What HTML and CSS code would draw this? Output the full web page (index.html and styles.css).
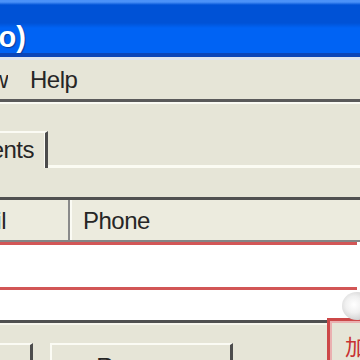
FILE: index.html
```html
<!DOCTYPE html>
<html>
<head>
    <meta charset="utf-8">
    <title>Client Manager (Demo)</title>
    <link rel="stylesheet" href="styles.css">
</head>
<body>
    <div class="window">
        <div class="titlebar">
            <span class="clip title-clip"><span>Client Manager (Demo)</span></span>
        </div>

        <div class="menubar">
            <span class="clip menu-clip"><span>File Edit View</span></span>
            <span class="menu-item">Help</span>
        </div>

        <div class="tabstrip">
            <div class="tab">
                <span class="clip tab-clip"><span>Clients</span></span>
            </div>
        </div>

        <div class="panel">
            <div class="listview">
                <div class="lv-header">
                    <div class="col col-email"><span class="clip email-clip"><span>Email</span></span></div>
                    <div class="col col-phone">Phone</div>
                </div>
                <div class="row row-first"></div>
                <div class="row"></div>
            </div>

            <div class="buttons">
                <div class="btn btn-edit"></div>
                <div class="btn btn-remove">Remove</div>
            </div>
        </div>

        <!-- annotation drawn over the screenshot -->
        <div class="callout">加</div>
        <div class="blob"></div>
    </div>
</body>
</html>
```

FILE: styles.css
```css
body {
    margin: 0;
    background: #e6e5d7;
    font-family: 'Liberation Sans', Arial, sans-serif;
    color: #262626;
}

.window {
    position: relative;
    width: 360px;
    height: 360px;
    overflow: hidden;
    background: #e6e5d7;
}

/* text that runs off the left edge of the crop */
.clip {
    display: flex;
    justify-content: flex-end;
    overflow: hidden;
    white-space: nowrap;
    flex-shrink: 0;
}

.titlebar {
    height: 57px;
    display: flex;
    align-items: center;
    padding-top: 21px;
    box-sizing: border-box;
    border-bottom: 4px solid #0b46b8;
    background: linear-gradient(to bottom,
        #4c92f8 0, #4c92f8 2px,
        #0052d6 5px, #0052d6 23px,
        #0063f4 28px, #0063f4 100%);
}

.title-clip {
    width: 26px;
    color: #fff;
    font-weight: bold;
    font-size: 29px;
    text-shadow: 1px 1px 1px #0a3c9c;
}

.menubar {
    height: 39px;
    display: flex;
    align-items: center;
    border-top: 3px solid #dfe6ee;
    border-bottom: 3px solid #5a5a5a;
    font-size: 24px;
    letter-spacing: -0.5px;
}

.menu-clip {
    width: 8px;
}

.menu-item {
    margin-left: 22px;
}

.tabstrip {
    height: 61px;
    border-top: 2px solid #fbfbf4;
    display: flex;
    align-items: flex-end;
}

.tab {
    position: relative;
    z-index: 1;
    width: 48px;
    height: 37px;
    margin-bottom: -3px;
    box-sizing: border-box;
    border-top: 2px solid #fbfbf4;
    border-right: 3px solid #4c4c4c;
    box-shadow: inset -1px 0 0 #fbfbf4;
    background: #e6e5d7;
    display: flex;
    align-items: center;
    font-size: 24px;
    letter-spacing: -0.5px;
}

.tab-clip {
    width: 34px;
    padding-bottom: 2px;
}

.panel {
    border-top: 3px solid #fbfbf2;
    padding-top: 29px;
}

.listview {
    background: #fff;
    border-top: 3px solid #505050;
    border-bottom: 3px solid #505050;
}

.lv-header {
    height: 40px;
    display: flex;
    background: #ecebde;
    border-bottom: 2px solid #858585;
    font-size: 24px;
    letter-spacing: -0.5px;
}

.col {
    display: flex;
    align-items: center;
    padding-top: 2px;
    box-sizing: border-box;
}

.col-email {
    width: 70px;
    border-right: 2px solid #8a8a8a;
}

.email-clip {
    width: 6px;
}

.col-phone {
    flex: 1;
    padding-left: 11px;
    border-left: 2px solid #fbfbf4;
}

.row {
    height: 30px;
}

.row-first {
    height: 42px;
    border-top: 3px solid #d25656;
    border-bottom: 3px solid #d25656;
    margin-right: 3px;
}

.buttons {
    border-top: 2px solid #f6f5ec;
    padding-top: 18px;
    display: flex;
    gap: 17px;
}

.btn {
    height: 60px;
    box-sizing: border-box;
    border-top: 2px solid #fbfbf4;
    border-right: 3px solid #4c4c4c;
    font-size: 24px;
}

.btn-edit {
    width: 33px;
}

.btn-remove {
    width: 183px;
    border-left: 2px solid #fbfbf4;
    text-align: center;
    padding-top: 8px;
}

.callout {
    position: absolute;
    left: 327px;
    top: 318px;
    width: 60px;
    height: 60px;
    border: 3px solid #cc4848;
    box-shadow: inset 2px 2px 0 #eab0b0;
    background: #e6e5d7;
    color: #c83232;
    font-family: 'Noto Sans CJK SC', sans-serif;
    font-size: 22px;
    line-height: 1;
    padding: 13px 0 0 15px;
}

.blob {
    position: absolute;
    left: 342px;
    top: 292px;
    width: 30px;
    height: 28px;
    border-radius: 50%;
    background: radial-gradient(circle at 40% 45%, #ffffff 0, #f0f0f0 35%, #cfcfcf 70%, #b8b8b8 100%);
}
```
